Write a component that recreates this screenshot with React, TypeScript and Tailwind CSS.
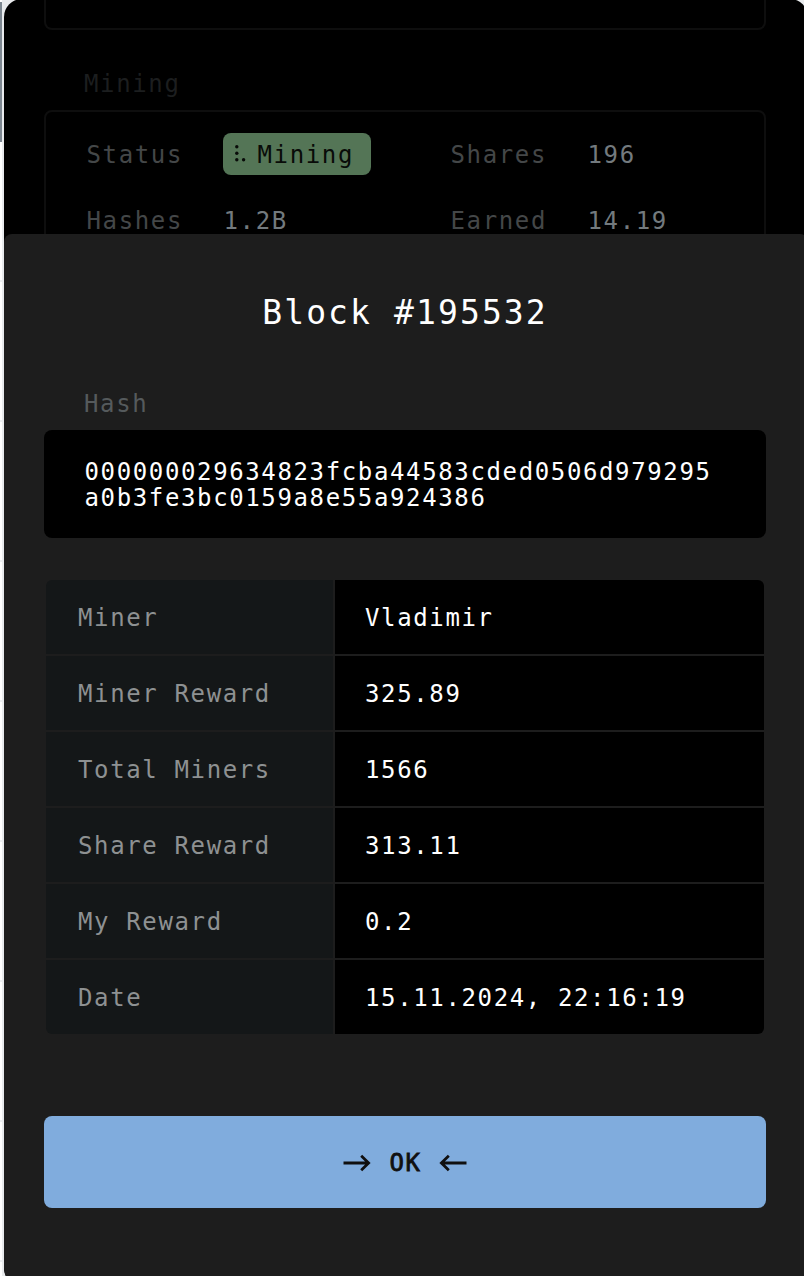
const details = [
  ["Miner", "Vladimir"],
  ["Miner Reward", "325.89"],
  ["Total Miners", "1566"],
  ["Share Reward", "313.11"],
  ["My Reward", "0.2"],
  ["Date", "15.11.2024, 22:16:19"],
];

const gutterLines = [280, 420, 560, 700, 840, 980, 1120, 1260];

function Arrow({ flip = false }: { flip?: boolean }) {
  return (
    <svg width="28" height="20" viewBox="0 0 28 20" fill="none" stroke="#101010" strokeWidth="2.8" className={flip ? "-scale-x-100" : ""}>
      <path d="M0.5 10H25.5M18.2 2.8L25.6 10L18.2 17.2" />
    </svg>
  );
}

function Stat({ label, value }: { label: string; value: string }) {
  return (
    <div className="flex h-[42px] items-center pt-[2px]">
      <span className="w-[137px] text-[#444748]">{label}</span>
      <span className="text-[#737a7e]">{value}</span>
    </div>
  );
}

export default function App() {
  return (
    <div className="flex h-[1276px] w-[804px] overflow-hidden bg-[#e9ebed] font-['DejaVu_Sans_Mono','Liberation_Mono',monospace] text-[24px] leading-[26px] tracking-[1.63px]">
      <div className="relative w-[2px] shrink-0 bg-white">
        <div className="mt-[2px] h-[140px] bg-[#7d8791]" />
        {gutterLines.map((y) => (
          <div key={y} className="absolute left-0 h-[2px] w-[2px] bg-[#eceef0]" style={{ top: y }} />
        ))}
      </div>
      <div className="-mt-px ml-[2px] flex h-[1287px] w-[804px] shrink-0 flex-col overflow-hidden rounded-[18px] bg-black pt-px">
        <div className="flex h-[234px] shrink-0 flex-col overflow-hidden px-10">
          <div className="h-[30px] w-[722px] shrink-0 rounded-b-[8px] border-2 border-t-0 border-[#0e0e0e]" />
          <div className="mt-[41px] pl-10 text-[#1c1e1f]">Mining</div>
          <div className="mt-[13px] grid h-[180px] w-[722px] shrink-0 grid-cols-[364px_1fr] content-start gap-y-6 rounded-[8px] border-2 border-[#0e0e0e] pl-[40.5px] pt-[21px]">
            <div className="flex h-[42px] items-center">
              <span className="w-[136px] pt-[2px] text-[#444748]">Status</span>
              <span className="flex h-[42px] w-[148px] items-center rounded-[8px] bg-[#547556] pl-[12px] text-[#080b08]">
                <svg width="12" height="18" viewBox="0 0 12 18" className="mr-[11px] shrink-0" fill="#080b08">
                  <circle cx="1.8" cy="1.8" r="1.7" />
                  <circle cx="1.8" cy="8.2" r="1.7" />
                  <circle cx="1.8" cy="14.8" r="1.7" />
                  <circle cx="8.6" cy="14.8" r="1.7" />
                </svg>
                <span className="pt-[2px]">Mining</span>
              </span>
            </div>
            <Stat label="Shares" value="196" />
            <Stat label="Hashes" value="1.2B" />
            <Stat label="Earned" value="14.19" />
          </div>
        </div>
        <div className="flex flex-1 flex-col rounded-t-[8px] bg-[#1d1d1d] px-10">
          <h1 className="mt-[59px] w-[722px] text-center text-[33px] leading-10 tracking-[2.1px] text-white">Block #195532</h1>
          <div className="mt-[58px] pl-10 text-[#555a5c]">Hash</div>
          <div className="mt-[13px] h-[108px] w-[722px] break-all rounded-[8px] bg-black pl-[40.5px] pr-[50px] pt-[29px] text-white">
            000000029634823fcba44583cded0506d979295a0b3fe3bc0159a8e55a924386
          </div>
          <div className="ml-[2px] mt-[42px] flex w-[718px] flex-col gap-[2px] overflow-hidden rounded-[6px]">
            {details.map(([label, value]) => (
              <div key={label} className="flex h-[74px] gap-[2px]">
                <div className="flex w-[286.5px] items-center bg-[#141718] pl-8 pt-[2px] text-[#8e9192]">{label}</div>
                <div className="flex flex-1 items-center bg-black pl-[30.5px] pt-[2px] text-white">{value}</div>
              </div>
            ))}
          </div>
          <button className="mt-[82px] flex h-[92px] w-[722px] items-center justify-center rounded-[8px] bg-[#80acdd] pt-[2px] text-[#101010]">
            <Arrow />
            <span className="ml-[18px] mr-[17px] [-webkit-text-stroke:0.8px_#101010]">OK</span>
            <Arrow flip />
          </button>
        </div>
      </div>
    </div>
  );
}
